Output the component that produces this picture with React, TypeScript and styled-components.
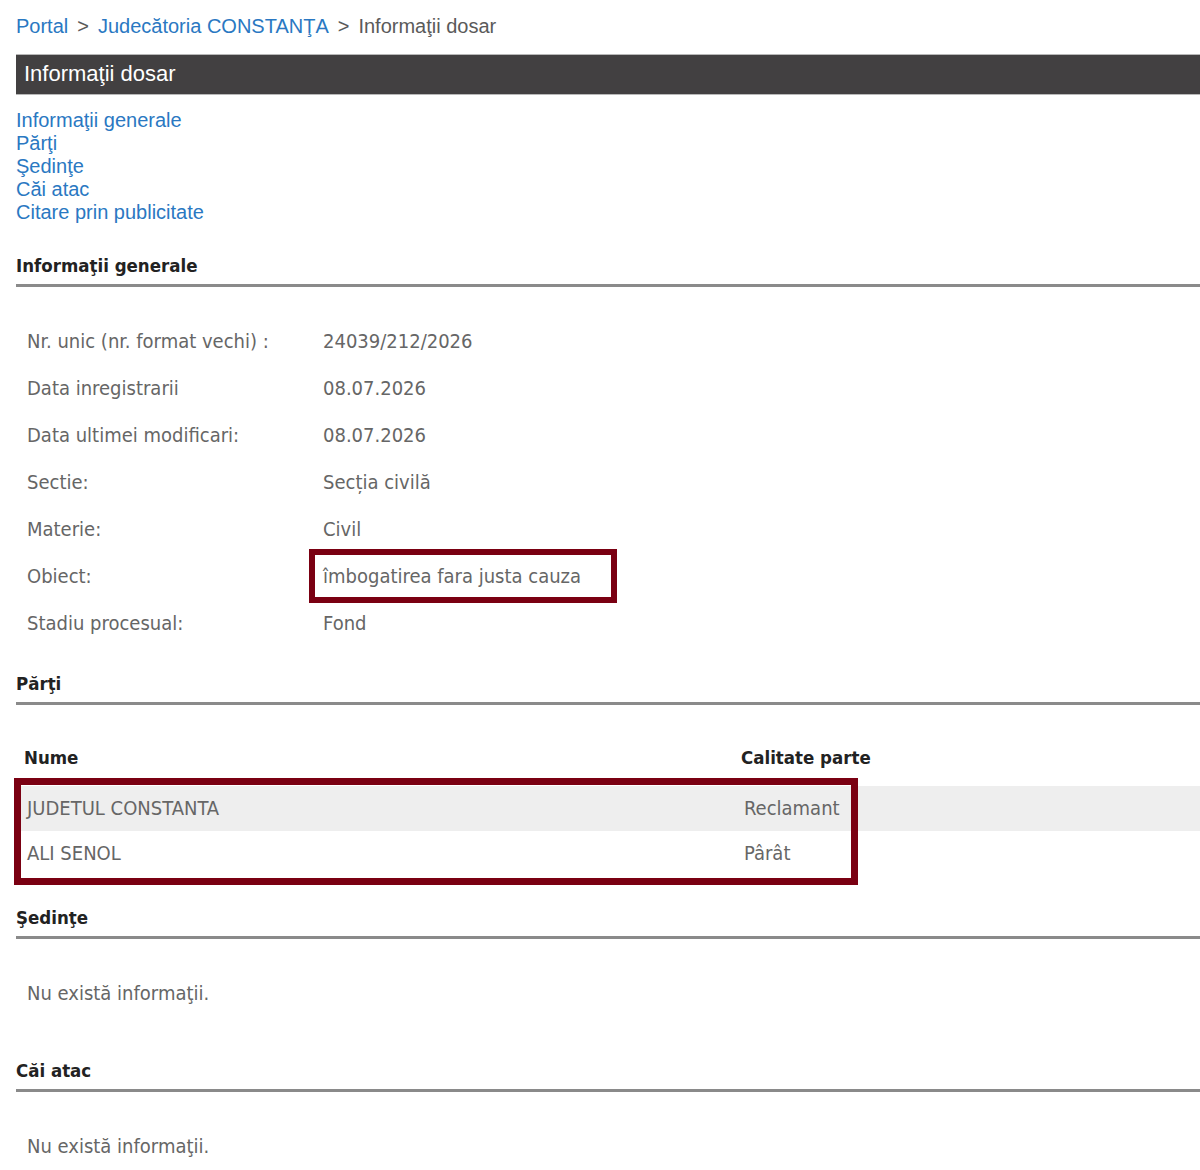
import React from 'react';
import styled, { createGlobalStyle } from 'styled-components';

const GlobalStyle = createGlobalStyle`
  html, body {
    margin: 0;
    padding: 0;
    background: #fff;
    overflow: hidden;
  }
`;

const Page = styled.div`
  width: 1260px;
  padding: 12px 0 0 16px;
  box-sizing: border-box;
  font-family: "Liberation Sans", Arial, sans-serif;
`;

const Breadcrumb = styled.div`
  font-size: 20px;
  line-height: 28px;
  color: #5a5a5a;
  display: flex;
  gap: 9px;
`;

const Crumb = styled.a<{ $current?: boolean }>`
  color: ${(p) => (p.$current ? '#5a5a5a' : '#2a78c2')};
  text-decoration: none;
`;

const TitleBar = styled.div`
  margin-top: 14px;
  height: 39px;
  background: #424041;
  border-top: 1px solid #b8b8b8;
  border-bottom: 1px solid #b8b8b8;
  color: #fff;
  font-size: 22px;
  line-height: 37px;
  padding-left: 8px;
`;

const Nav = styled.nav`
  display: flex;
  flex-direction: column;
  margin-top: 14px;
`;

const NavLink = styled.a`
  color: #2a78c2;
  font-size: 20px;
  line-height: 23px;
  text-decoration: none;
`;

const Section = styled.section<{ $gap?: number }>`
  margin-top: ${(p) => p.$gap ?? 0}px;
  font-family: "DejaVu Sans Condensed", "DejaVu Sans", Tahoma, sans-serif;
`;

const SectionTitle = styled.h2`
  margin: 0;
  font-size: 18.5px;
  font-weight: bold;
  color: #222;
  line-height: 28px;
  padding-bottom: 4px;
  border-bottom: 3px solid #8a8a8a;
`;

const InfoGrid = styled.div`
  display: grid;
  grid-template-columns: 296px auto;
  grid-auto-rows: 47px;
  align-items: center;
  padding: 30px 0 0 11px;
  font-size: 20px;
  color: #666;
`;

const HighlightBox = styled.span`
  justify-self: start;
  margin-left: -14px;
  padding: 9px 30px 9px 8px;
  border: 6px solid #7a0012;
`;

const PartiesTable = styled.div`
  position: relative;
  margin-top: 37px;
  font-size: 20px;
  color: #666;
`;

const PartyRow = styled.div<{ $shaded?: boolean; $head?: boolean }>`
  display: grid;
  grid-template-columns: 717px auto;
  height: ${(p) => (p.$head ? '44px' : '45px')};
  line-height: ${(p) => (p.$head ? '32px' : '45px')};
  padding-left: ${(p) => (p.$head ? '8px' : '11px')};
  background: ${(p) => (p.$shaded ? '#eeeeee' : 'transparent')};
  color: ${(p) => (p.$head ? '#222' : '#666')};
  font-weight: ${(p) => (p.$head ? 'bold' : 'normal')};
  font-size: ${(p) => (p.$head ? '18.5px' : '20px')};
`;

const RedFrame = styled.div`
  position: absolute;
  left: -2px;
  top: 36px;
  width: 844px;
  height: 107px;
  box-sizing: border-box;
  border: 7px solid #7a0012;
  pointer-events: none;
`;

const EmptyNote = styled.p`
  margin: 0;
  padding: 42px 0 52px 11px;
  font-size: 20px;
  color: #666;
`;

const info: [string, string][] = [
  ['Nr. unic (nr. format vechi) :', '24039/212/2026'],
  ['Data inregistrarii', '08.07.2026'],
  ['Data ultimei modificari:', '08.07.2026'],
  ['Sectie:', 'Secția civilă'],
  ['Materie:', 'Civil'],
  ['Obiect:', 'îmbogatirea fara justa cauza'],
  ['Stadiu procesual:', 'Fond'],
];

export default function App() {
  return (
    <Page>
      <GlobalStyle />
      <Breadcrumb>
        <Crumb href="#">Portal</Crumb>
        <span>&gt;</span>
        <Crumb href="#">Judecătoria CONSTANŢA</Crumb>
        <span>&gt;</span>
        <Crumb $current>Informaţii dosar</Crumb>
      </Breadcrumb>
      <TitleBar>Informaţii dosar</TitleBar>
      <Nav>
        <NavLink href="#">Informaţii generale</NavLink>
        <NavLink href="#">Părţi</NavLink>
        <NavLink href="#">Şedinţe</NavLink>
        <NavLink href="#">Căi atac</NavLink>
        <NavLink href="#">Citare prin publicitate</NavLink>
      </Nav>

      <Section $gap={28}>
        <SectionTitle>Informaţii generale</SectionTitle>
        <InfoGrid>
          {info.map(([label, value]) => (
            <React.Fragment key={label}>
              <span>{label}</span>
              {label === 'Obiect:' ? <HighlightBox>{value}</HighlightBox> : <span>{value}</span>}
            </React.Fragment>
          ))}
        </InfoGrid>
      </Section>

      <Section $gap={24}>
        <SectionTitle>Părţi</SectionTitle>
        <PartiesTable>
          <PartyRow $head>
            <span>Nume</span>
            <span>Calitate parte</span>
          </PartyRow>
          <PartyRow $shaded>
            <span>JUDETUL CONSTANTA</span>
            <span>Reclamant</span>
          </PartyRow>
          <PartyRow>
            <span>ALI SENOL</span>
            <span>Pârât</span>
          </PartyRow>
          <RedFrame />
        </PartiesTable>
      </Section>

      <Section $gap={28}>
        <SectionTitle>Şedinţe</SectionTitle>
        <EmptyNote>Nu există informaţii.</EmptyNote>
      </Section>

      <Section>
        <SectionTitle>Căi atac</SectionTitle>
        <EmptyNote>Nu există informaţii.</EmptyNote>
      </Section>
    </Page>
  );
}
